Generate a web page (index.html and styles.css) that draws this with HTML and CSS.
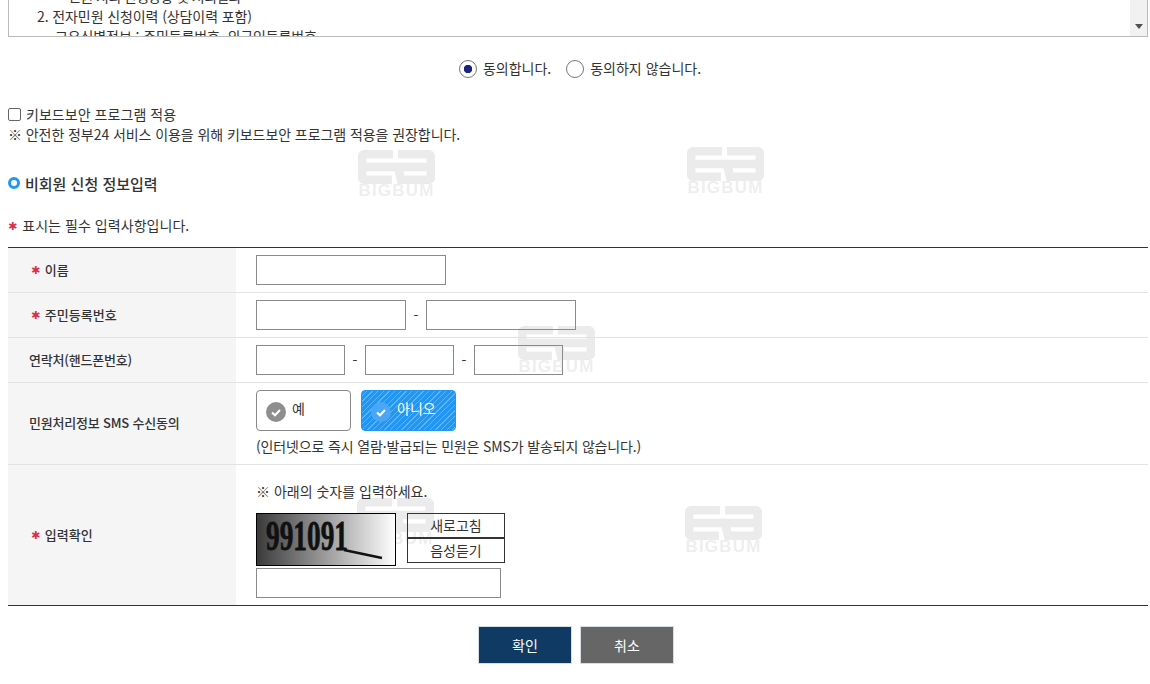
FILE: index.html
```html
<!DOCTYPE html>
<html lang="ko">
<head>
  <meta charset="UTF-8">
  <title>비회원 신청 정보입력</title>
  <meta name="viewport" content="width=device-width, initial-scale=1.0">
  <link rel="stylesheet" href="styles.css">
</head>
<body>
  <svg class="defs" width="0" height="0">
    <symbol id="logo" viewBox="0 0 75 33">
      <path d="M34 4H7Q4 4 4 7V26Q4 29 7 29H33M4 16.500H38" />
      <path d="M39 4H68Q71 4 71 7V26Q71 29 68 29H42L39 16.500H71" />
    </symbol>
  </svg>

  <div class="mark mark1"><svg class="markLogo"><use href="#logo"></use></svg><span>BIGBUM</span></div>
  <div class="mark mark2"><svg class="markLogo"><use href="#logo"></use></svg><span>BIGBUM</span></div>
  <div class="mark mark3"><svg class="markLogo"><use href="#logo"></use></svg><span>BIGBUM</span></div>
  <div class="mark mark4"><svg class="markLogo"><use href="#logo"></use></svg><span>BIGBUM</span></div>
  <div class="mark mark5"><svg class="markLogo"><use href="#logo"></use></svg><span>BIGBUM</span></div>

  <div class="terms">
    <div class="termsText">
      <p class="depth2">민원 처리 진행상황 및 처리결과</p>
      <p class="depth1">2. 전자민원 신청이력 (상담이력 포함)</p>
      <p class="depth3">고유식별정보 : 주민등록번호, 외국인등록번호</p>
    </div>
    <div class="scrollbar"><i class="arrow"></i></div>
  </div>

  <div class="agree">
    <label><input type="radio" name="agree" checked> 동의합니다.</label>
    <label><input type="radio" name="agree"> 동의하지 않습니다.</label>
  </div>

  <label class="keyboard"><input type="checkbox"> 키보드보안 프로그램 적용</label>
  <p class="keyboardNote">※ 안전한 정부24 서비스 이용을 위해 키보드보안 프로그램 적용을 권장합니다.</p>

  <h3 class="title">비회원 신청 정보입력</h3>
  <p class="required"><span class="star">✱</span> 표시는 필수 입력사항입니다.</p>

  <table class="formTable">
    <tr>
      <th class="short"><span class="star">✱</span> 이름</th>
      <td><input type="text" class="w190"></td>
    </tr>
    <tr>
      <th class="short"><span class="star">✱</span> 주민등록번호</th>
      <td><input type="text" class="w150"><span class="dash">-</span><input type="text" class="w150"></td>
    </tr>
    <tr>
      <th>연락처(핸드폰번호)</th>
      <td><input type="text" class="w89"><span class="dash">-</span><input type="text" class="w89"><span class="dash">-</span><input type="text" class="w89"></td>
    </tr>
    <tr class="rowSms">
      <th>민원처리정보 SMS 수신동의</th>
      <td>
        <div class="smsBtns">
          <button class="sms">
            <svg class="check" viewBox="0 0 20 20"><circle cx="10" cy="10" r="10" fill="#8e8e8e"/><path d="M6 10.500l3 2.800 5-5.300" fill="none" stroke="#fff" stroke-width="2"/></svg>
            예
          </button>
          <button class="sms on">
            <svg class="check" viewBox="0 0 20 20"><circle cx="10" cy="10" r="10" fill="#4ba7f5"/><path d="M6 10.500l3 2.800 5-5.300" fill="none" stroke="#fff" stroke-width="2"/></svg>
            아니오
          </button>
        </div>
        <p class="smsNote">(인터넷으로 즉시 열람·발급되는 민원은 SMS가 발송되지 않습니다.)</p>
      </td>
    </tr>
    <tr class="rowCaptcha">
      <th class="short"><span class="star">✱</span> 입력확인</th>
      <td>
        <p class="captchaNote">※ 아래의 숫자를 입력하세요.</p>
        <div class="captchaRow">
          <svg class="captcha" viewBox="0 0 140 53">
            <defs>
              <linearGradient id="fade">
                <stop offset="0" stop-color="#3a3a3a"/>
                <stop offset="1" stop-color="#fff"/>
              </linearGradient>
            </defs>
            <rect width="140" height="53" fill="url(#fade)"/>
            <text x="10" y="37" class="captchaText" textLength="82" lengthAdjust="spacingAndGlyphs">991091</text>
            <path d="M88 37L126 45" stroke="#111" stroke-width="2.500"/>
            <rect x=".5" y=".5" width="139" height="52" fill="none" stroke="#000"/>
          </svg>
          <div class="captchaBtns">
            <button>새로고침</button>
            <button>음성듣기</button>
          </div>
        </div>
        <input type="text" class="w245">
      </td>
    </tr>
  </table>

  <div class="actions">
    <button class="btn ok">확인</button>
    <button class="btn cancel">취소</button>
  </div>
</body>
</html>
```

FILE: styles.css
```css
html {
  background: #fff;
}

body {
  font-family: "Noto Sans CJK KR", "Noto Sans", sans-serif;
  font-size: 14px;
  letter-spacing: 0;
  color: #333;
  margin: 0;
  padding: 0 2px 0 8px;
  height: 684px;
  overflow: hidden;
  box-sizing: border-box;
}

p {
  margin: 0;
}

.defs {
  position: absolute;
}

/* watermarks sit under the page */
.mark {
  position: absolute;
  z-index: -1;
  width: 77px;
  text-align: center;
  font-family: "Liberation Sans", sans-serif;
  font-size: 17px;
  font-weight: bold;
  letter-spacing: 1.200px;
  line-height: 14px;
  color: #eeeeee;
  filter: blur(.4px);
}

.mark span {
  display: block;
  white-space: nowrap;
}

.markLogo {
  display: block;
  width: 77px;
  height: 34px;
  fill: none;
  stroke: #ebebeb;
  stroke-width: 8.500;
}

.mark1 { left: 358px; top: 150px; }
.mark2 { left: 687px; top: 147px; }
.mark3 { left: 518px; top: 326px; }
.mark4 { left: 357px; top: 498px; }
.mark5 { left: 685px; top: 506px; }

.terms {
  display: flex;
  height: 37px;
  box-sizing: border-box;
  border: 1px solid #bbb;
  border-top: none;
  overflow: hidden;
}

.termsText {
  flex: 1;
  margin-top: -14px;
  line-height: 20px;
  letter-spacing: -0.1px;
  white-space: nowrap;
}

.depth1 {
  padding-left: 28px;
}

.depth2 {
  padding-left: 59px;
  letter-spacing: -0.6px;
}

.depth3 {
  padding-left: 46px;
}

.scrollbar {
  width: 17px;
  background: #f1f1f1;
  position: relative;
}

.arrow {
  position: absolute;
  left: 5px;
  top: 24px;
  border: 4px solid transparent;
  border-top: 5px solid #505050;
  border-bottom: none;
}

.agree {
  margin-top: 21px;
  height: 20px;
  display: flex;
  justify-content: center;
  gap: 15px;
  padding-left: 4px;
  line-height: 18px;
}

.agree label {
  display: flex;
  align-items: center;
  gap: 6px;
}

.agree input {
  appearance: none;
  width: 18px;
  height: 18px;
  margin: 2px 0 0;
  border: 1px solid #777;
  border-radius: 50%;
  background: #fff;
}

.agree input:checked {
  background: radial-gradient(circle, #1a237e 0 4px, #fff 4.500px);
}

.keyboard {
  margin-top: 26px;
  height: 20px;
  display: flex;
  align-items: center;
  gap: 5px;
  letter-spacing: 0.05px;
}

.keyboard input {
  appearance: none;
  width: 13px;
  height: 13px;
  margin: 0;
  border: 1px solid #666;
  border-radius: 2px;
}

.keyboardNote {
  height: 20px;
  line-height: 20px;
  letter-spacing: -0.07px;
}

.title {
  margin: 28px 0 0;
  height: 22px;
  display: flex;
  align-items: center;
  gap: 5px;
  font-size: 15px;
  font-weight: 500;
}

.title::before {
  content: "";
  width: 12px;
  height: 12px;
  box-sizing: border-box;
  border: 3px solid #2196f3;
  border-radius: 50%;
}

.required {
  margin-top: 22px;
  height: 20px;
  line-height: 18px;
  letter-spacing: 0.05px;
}

.star {
  color: #d9304c;
  font-family: "DejaVu Sans", sans-serif;
  font-size: 11px;
  vertical-align: 1px;
  margin-right: 1px;
}

.formTable {
  width: 100%;
  margin-top: 11px;
  border-collapse: separate;
  border-spacing: 0;
  border-top: 1px solid #333;
  border-bottom: 1px solid #333;
  table-layout: fixed;
}

.formTable th,
.formTable td {
  height: 45px;
  box-sizing: border-box;
  border-bottom: 1px solid #e2e2e2;
}

.formTable tr:last-child th,
.formTable tr:last-child td {
  border-bottom: none;
}

.formTable th {
  width: 228px;
  padding: 0 0 2px 21px;
  background: #f5f5f5;
  text-align: left;
  font-size: 13px;
  letter-spacing: -0.2px;
  font-weight: 500;
}

.formTable th.short {
  padding-left: 23px;
  letter-spacing: 0;
}

.formTable td {
  padding: 0 0 0 20px;
}

input[type="text"] {
  height: 30px;
  box-sizing: border-box;
  border: 1px solid #8a8a8a;
  background: transparent;
  padding: 0;
  vertical-align: middle;
  display: inline-block;
}

.w190 { width: 190px; }
.w150 { width: 150px; }
.w89 { width: 89px; }
.w245 { width: 245px; display: block; }

.dash {
  display: inline-block;
  width: 20px;
  text-align: center;
  vertical-align: -2px;
  line-height: 14px;
}

.rowSms th,
.rowSms td {
  height: 82px;
}

.smsBtns {
  display: flex;
  gap: 10px;
}

.sms {
  width: 95px;
  height: 41px;
  box-sizing: border-box;
  border: 1px solid #888;
  border-radius: 4px;
  background: #fff;
  padding: 0 0 6px 9px;
  display: flex;
  align-items: center;
  gap: 6px;
  font: inherit;
  color: #333;
}

.sms.on {
  border-color: #2196f3;
  color: #fff;
  background: repeating-linear-gradient(135deg, #2196f3 0 3px, #5db4f7 3px 4px);
}

.check {
  width: 20px;
  height: 20px;
  margin-top: 8px;
  flex: none;
}

.smsNote {
  margin-top: 4px;
  line-height: 22px;
  letter-spacing: -0.15px;
}

.rowCaptcha th,
.rowCaptcha td {
  height: 140px;
}

.formTable .rowCaptcha td {
  padding-top: 10px;
}

.captchaNote {
  line-height: 16px;
}

.captchaRow {
  display: flex;
  gap: 11px;
  margin-top: 14px;
  margin-bottom: 2px;
}

.captcha {
  width: 140px;
  height: 53px;
  display: block;
}

.captchaText {
  font-family: "Liberation Serif", serif;
  font-size: 42px;
  font-weight: bold;
  fill: #111;
  stroke: #111;
  stroke-width: .8;
}

.captchaBtns button {
  display: block;
  width: 98px;
  height: 25px;
  padding: 0;
  border: 1px solid #333;
  background: transparent;
  font: inherit;
  color: #333;
}

.actions {
  margin-top: 20px;
  padding-right: 4px;
  display: flex;
  justify-content: center;
  gap: 8px;
}

.btn {
  width: 94px;
  height: 38px;
  border: 1px solid #d5dde5;
  color: #fff;
  font: inherit;
}

.ok {
  background: #0e3a64;
}

.cancel {
  background: #666;
}
```
